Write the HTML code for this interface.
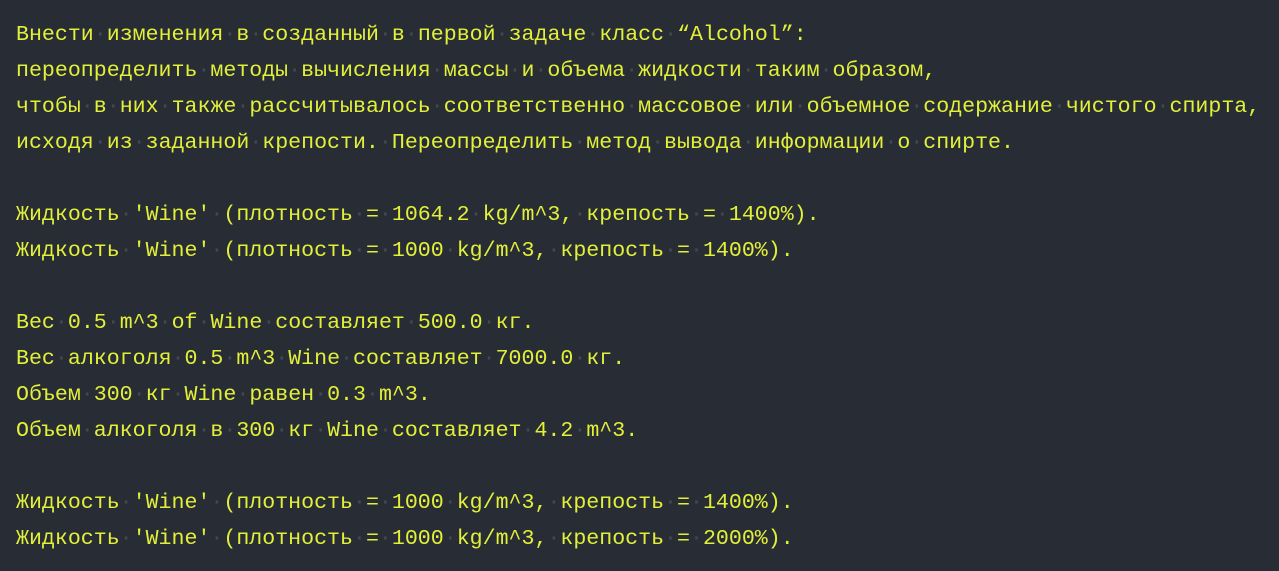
<!DOCTYPE html>
<html><head><meta charset="utf-8"><style>
html,body{margin:0;padding:0;background:#282c34;width:1279px;height:571px;overflow:hidden}
pre{margin:0;padding:17px 0 0 16px;font-family:"Liberation Mono",monospace;font-size:21.6px;line-height:36px;color:#e2f03a;white-space:pre}
.s{color:#43484f}
</style></head><body><pre id="t">Внести изменения в созданный в первой задаче класс “Alcohol”:
переопределить методы вычисления массы и объема жидкости таким образом,
чтобы в них также рассчитывалось соответственно массовое или объемное содержание чистого спирта,
исходя из заданной крепости. Переопределить метод вывода информации о спирте.

Жидкость 'Wine' (плотность = 1064.2 kg/m^3, крепость = 1400%).
Жидкость 'Wine' (плотность = 1000 kg/m^3, крепость = 1400%).

Вес 0.5 m^3 of Wine составляет 500.0 кг.
Вес алкоголя 0.5 m^3 Wine составляет 7000.0 кг.
Объем 300 кг Wine равен 0.3 m^3.
Объем алкоголя в 300 кг Wine составляет 4.2 m^3.

Жидкость 'Wine' (плотность = 1000 kg/m^3, крепость = 1400%).
Жидкость 'Wine' (плотность = 1000 kg/m^3, крепость = 2000%).</pre>
<script>var t=document.getElementById('t');t.innerHTML=t.innerHTML.replace(/ /g,'<span class="s">·</span>');</script>
</body></html>
